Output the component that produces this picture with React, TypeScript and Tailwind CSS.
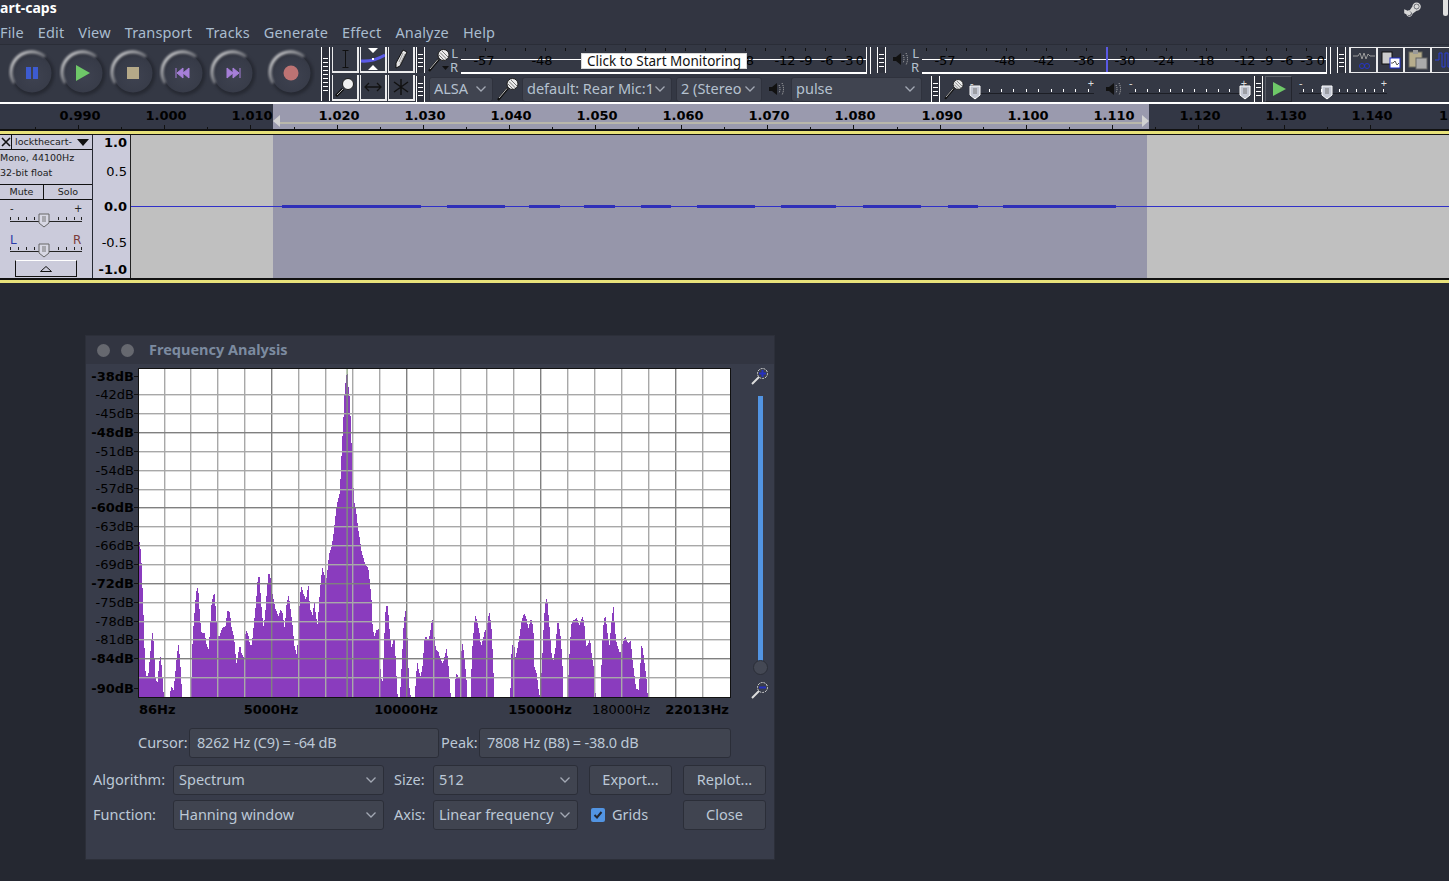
// App.tsx
import { FaSteamSymbol } from "react-icons/fa";

const SANS = "font-['Noto_Sans','Open_Sans',sans-serif]";
const DEJAVU = "font-['DejaVu_Sans',sans-serif]";

const menus = ["File", "Edit", "View", "Transport", "Tracks", "Generate", "Effect", "Analyze", "Help"];

// x, y of the spectrum outline, read off the reference in page pixels
const outlineA = [[27,27],[33,66],[36,133],[39,215],[42,293],[45,415],[50,440],[55,435],[60,380],[65,320],[68,306],[72,350],[76,440],[82,460],[88,395],[92,378],[96,420],[100,485],[103,498],[120,498],[122,480],[126,467],[130,485],[134,450],[140,385],[145,340],[150,385],[155,470],[157,498],[182,498],[184,465],[186,370],[190,295],[195,230],[198,190],[202,170],[206,190],[210,265],[215,310],[224,310],[230,345],[236,358],[240,300],[245,215],[253,186],[258,245],[262,320],[268,318],[278,292],[286,292],[293,238],[300,250],[305,295],[312,320],[317,378],[320,402],[325,370],[330,342],[335,372],[342,382],[346,312],[350,300],[355,315],[360,343],[365,345],[370,300],[378,220],[383,150],[388,132],[393,215],[400,290],[405,260],[410,190],[415,133],[420,130],[425,180],[430,205],[436,235],[445,258],[452,238],[458,250],[464,295],[470,220],[476,195],[482,240],[488,290],[493,345],[500,375],[503,340],[508,235],[513,165],[520,190],[528,210],[535,162],[540,235],[548,255],[553,210],[558,260],[563,285],[570,180],[577,112],[583,135],[590,145],[597,75],[605,50],[612,0]];
const peak = [[336.7,505],[340,491.7],[341,466.7],[342,445],[343.3,421.7],[344.3,398],[345.7,380],[347.3,370.7],[348.3,385],[350,400],[350.7,423],[351.7,448],[352.3,468],[354.3,501.7],[356.7,515],[358.3,530]];
const outlineB = [[690,30],[695,65],[705,100],[715,115],[720,160],[725,215],[728,295],[733,318],[740,300],[747,297],[749,360],[752,430],[757,465],[760,400],[763,320],[767,235],[772,222],[776,260],[780,320],[785,355],[790,330],[794,330],[798,405],[802,490],[805,498],[810,498],[812,462],[816,390],[820,300],[825,245],[828,240],[832,310],[836,430],[838,470],[842,498],[855,498],[858,440],[862,395],[866,420],[872,440],[878,405],[884,320],[890,320],[895,332],[900,310],[905,275],[908,270],[913,315],[918,360],[925,365],[932,390],[938,400],[944,380],[950,355],[955,400],[960,465],[962,498],[975,498]];
const outlineC = [[15,465],[18,430],[25,440],[30,440],[33,375],[38,338],[45,400],[50,455],[52,498],[62,498],[66,370],[70,315],[75,255],[82,275],[88,305],[93,350],[100,325],[105,298],[110,300],[115,260],[119,247],[125,300],[128,370],[132,465],[133,498],[180,498],[183,450],[185,345],[193,345],[197,385],[203,350],[210,310],[215,270],[222,250],[228,260],[235,295],[243,265],[250,290],[253,410],[260,430],[267,490],[270,498],[273,460],[277,380],[282,265],[287,215],[291,202],[296,260],[300,310],[305,375],[310,392],[316,360],[322,280],[326,278],[333,330],[338,415],[339,498],[352,498],[355,445],[360,340],[365,275],[380,265],[388,285],[397,258],[403,280],[408,350],[415,340],[420,325],[425,375],[432,418],[433,498],[436,485],[438,498],[452,498],[456,350],[462,265],[467,260],[472,305],[478,350],[484,280],[490,225],[495,300],[500,340],[508,365],[513,365],[517,345],[525,318],[535,340],[542,332],[548,395],[553,435],[558,475],[566,480],[570,425],[575,340],[580,370],[586,420],[590,450],[593,495],[595,498]];

const spectrum = [
  ...outlineA.map(([x, y]) => [130 + x / 3, 530 + y / 3]),
  ...peak,
  ...outlineB.map(([x, y]) => [130 + x / 3, 530 + y / 3]),
  ...outlineC.map(([x, y]) => [450 + x / 3, 530 + y / 3]),
];

function spectrumPath() {
  let d = "";
  for (let x = 139; x < 649; x++) {
    const i = spectrum.findIndex((p) => p[0] >= x + 0.5);
    if (i <= 0) continue;
    const [x0, y0] = spectrum[i - 1];
    const [x1, y1] = spectrum[i];
    const y = Math.round(y0 + ((y1 - y0) * (x + 0.5 - x0)) / (x1 - x0 || 1));
    if (y < 696) d += `M${x} ${y}V696.5H${x + 1}V${y}Z`;
  }
  return d;
}

const gridY = [394, 413, 432, 451, 470, 489, 507, 526, 545, 564, 583, 602, 621, 639, 658, 677];
const darkY = [432, 507, 583, 658];
const gridX = [164, 190, 217, 244, 271, 298, 325, 352, 379, 406, 433, 460, 486, 513, 540, 567, 594, 621, 648, 675, 702];
const darkX = [271, 406, 540, 675];

const dbLabels: [string, number, boolean][] = [
  ["-38dB", 377, true], ["-42dB", 395, false], ["-45dB", 414, false], ["-48dB", 433, true],
  ["-51dB", 452, false], ["-54dB", 471, false], ["-57dB", 489, false], ["-60dB", 508, true],
  ["-63dB", 527, false], ["-66dB", 546, false], ["-69dB", 565, false], ["-72dB", 584, true],
  ["-75dB", 603, false], ["-78dB", 622, false], ["-81dB", 640, false], ["-84dB", 659, true],
  ["-90dB", 689, true],
];

const rulerMarks = [78, 164, 250, 337, 423, 509, 595, 681, 767, 853, 940, 1026, 1112, 1198, 1284, 1370];
const rulerText = ["0.990", "1.000", "1.010", "1.020", "1.030", "1.040", "1.050", "1.060", "1.070", "1.080", "1.090", "1.100", "1.110", "1.120", "1.130", "1.140"];

const waveSegments = [[282, 421], [447, 505], [529, 560], [584, 615], [641, 671], [697, 755], [781, 836], [863, 921], [948, 978], [1003, 1116]];
const trackTicks = [0, 8, 16, 24, 48, 56, 64, 71];

function Gripper({ tall }: { tall?: boolean }) {
  const bars = tall ? 9 : 4;
  return (
    <div className={`flex w-[9px] shrink-0 flex-col items-center justify-center gap-[3px] border-x border-white bg-[#2f323d] ${tall ? "h-[54px]" : "h-[26px]"}`}>
      {Array.from({ length: bars }).map((_, i) => (
        <span key={i} className="h-[1px] w-[5px] bg-white" />
      ))}
    </div>
  );
}

function RoundButton({ id, children, className }: { id: string; children: React.ReactNode; className?: string }) {
  return (
    <svg width="48" height="50" viewBox="0 0 48 50" className={className}>
      <defs>
        <radialGradient id={`${id}-fill`} cx="0.55" cy="0.6" r="0.6">
          <stop offset="0" stopColor="#3e4250" />
          <stop offset="0.8" stopColor="#373b48" />
          <stop offset="1" stopColor="#30333e" />
        </radialGradient>
        <linearGradient id={`${id}-arc`} x1="0" y1="0" x2="1" y2="1">
          <stop offset="0.1" stopColor="#cfcfd1" />
          <stop offset="0.75" stopColor="#4a4d57" />
        </linearGradient>
      </defs>
      <circle cx="25" cy="26" r="21.5" fill="#262932" className="blur-[1.5px]" />
      <circle cx="24" cy="25" r="19.5" fill={`url(#${id}-fill)`} className="blur-[0.5px]" />
      <path d="M5.5 34A20.5 20.5 0 0 1 36 8" fill="none" stroke={`url(#${id}-arc)`} strokeWidth="3.2" strokeLinecap="round" className="blur-[0.8px]" />
      {children}
    </svg>
  );
}

function Mic({ className, caret }: { className?: string; caret?: boolean }) {
  return (
    <svg width="24" height="24" viewBox="0 0 24 24" className={className}>
      <path d="M1 23L11 11" stroke="#111" strokeWidth="2.4" />
      <path d="M2 21L10 11.5" stroke="#e6e6e6" strokeWidth="0.8" />
      <circle cx="15.5" cy="7" r="5.5" fill="#ececec" stroke="#1c1c1c" />
      <path d="M12 4.5l6.5 6.5M14 3l6 6M11 7l5 5" stroke="#555" strokeWidth="0.8" />
      {caret && <path d="M14 18H21L17.5 22Z" fill="#111" />}
    </svg>
  );
}

function Speaker({ className }: { className?: string }) {
  return (
    <svg width="18" height="16" viewBox="0 0 18 16" className={className}>
      <path d="M1 6H4L9 2V14L4 10H1Z" fill="#111" />
      <path d="M11 4Q13 8 11 12M14 2Q17 8 14 14" fill="none" stroke="#bbb" strokeWidth="1" strokeDasharray="1 1" />
    </svg>
  );
}

function Chevron() {
  return (
    <svg width="10" height="6" viewBox="0 0 10 6" className="shrink-0">
      <path d="M0.5 0.5L5 5L9.5 0.5" fill="none" stroke="#a3a9b4" strokeWidth="1.3" />
    </svg>
  );
}

function Meter({ labels, width, marker }: { labels: [string, number][]; width: number; marker?: number }) {
  const ticks = Array.from({ length: Math.floor(width / 20) }, (_, i) => i * 20 + 4);
  return (
    <div className="relative h-[27px] shrink-0 border-b-2 border-white" style={{ width }}>
      <div className="absolute left-0 right-0 top-[12px] h-[1px] bg-white" />
      {ticks.map((x) => (
        <span key={x} className="absolute top-[1px] h-[3px] w-[1px] bg-[#111]" style={{ left: x }} />
      ))}
      {labels.map(([t, x]) => (
        <span key={t + x} className={`${DEJAVU} absolute top-[6px] -translate-x-1/2 text-[13px] leading-[16px] text-black`} style={{ left: x }}>
          {t}
        </span>
      ))}
      {marker !== undefined && <span className="absolute bottom-0 top-0 w-[2px] bg-[#5a5ae6]" style={{ left: marker }} />}
    </div>
  );
}

function ToolCell({ children }: { children: React.ReactNode }) {
  return <div className="flex h-[26px] w-[27px] items-center justify-center border-r-2 border-b-2 border-l border-white/90">{children}</div>;
}

function SliderThumb({ light }: { light?: boolean }) {
  return (
    <svg width="12" height="15" viewBox="0 0 12 15" className="shrink-0">
      <path d="M1 1H11V10L6 14L1 10Z" fill={light ? "#d8d8e4" : "#c4c8d4"} stroke={light ? "#666" : "#fff"} />
      <path d="M4 4H8M4 6H8M4 8H8" stroke="#777" />
    </svg>
  );
}

function ToolbarSlider({ width, thumb }: { width: number; thumb: number }) {
  const dots = Array.from({ length: 10 }, (_, i) => ((i + 0.5) * width) / 10);
  return (
    <div className="relative h-[24px] shrink-0" style={{ width }}>
      <span className="absolute left-0 top-0 text-[11px] leading-[11px] text-[#ddd]">-</span>
      <span className="absolute right-0 top-0 text-[11px] leading-[11px] text-[#ddd]">+</span>
      <span className="absolute left-0 right-0 top-[16px] h-[1px] bg-[#1c1e25]" />
      {dots.map((x) => (
        <span key={x} className="absolute top-[12px] h-[3px] w-[1px] bg-white" style={{ left: x }} />
      ))}
      <div className="absolute top-[8px]" style={{ left: thumb }}>
        <SliderThumb />
      </div>
    </div>
  );
}

function ToolbarCombo({ label, width }: { label: string; width: number }) {
  return (
    <div className="flex h-[25px] shrink-0 items-center justify-between rounded-[3px] border border-[#2f323d] bg-[#404450] pl-[4px] pr-[6px]" style={{ width }}>
      <span className={`${SANS} whitespace-nowrap text-[14.5px] text-[#b5c1cf]`}>{label}</span>
      <Chevron />
    </div>
  );
}

function DialogCombo({ label, width }: { label: string; width: number }) {
  return (
    <div className="flex h-[30px] shrink-0 items-center justify-between rounded-[3px] border border-[#2b2e38] bg-[#404450] pl-[5px] pr-[7px]" style={{ width }}>
      <span className="whitespace-nowrap text-[14.5px] text-[#bcc8d6]">{label}</span>
      <Chevron />
    </div>
  );
}

function DialogButton({ label }: { label: string }) {
  return (
    <div className="flex h-[30px] w-[83px] shrink-0 items-center justify-center rounded-[3px] border border-[#2b2e38] bg-[#404450] text-[14.5px] text-[#bcc8d6]">
      {label}
    </div>
  );
}

function EditButton({ children }: { children: React.ReactNode }) {
  return <div className="flex h-[26px] w-[27px] shrink-0 items-center justify-center border-t border-l-2 border-b border-white/90">{children}</div>;
}

function TrackSlider({ top }: { top: number }) {
  return (
    <div className="absolute left-[10px] h-[1px] w-[72px] bg-[#222]" style={{ top }}>
      {trackTicks.map((x) => (
        <span key={x} className="absolute bottom-[2px] h-[3px] w-[1px] bg-[#222]" style={{ left: x }} />
      ))}
      <div className="absolute left-[28px] top-[-8px]">
        <SliderThumb light />
      </div>
    </div>
  );
}

export default function App() {
  return (
    <div className={`${SANS} h-[881px] w-[1449px] overflow-hidden bg-[#252831]`}>
      {/* window chrome */}
      <div className="relative h-[22px] bg-[#323541]">
        <span className="absolute left-0 top-0 text-[14px] font-bold leading-[16px] text-white">art-caps</span>
        <FaSteamSymbol className="absolute left-[1403px] top-0 text-[19px] text-[#d8d8d8]" />
        <div className="absolute left-[1443px] top-0 h-[16px] w-[5px] rounded-b-full bg-[#e0e0e0]" />
      </div>
      <div className="flex h-[22px] items-center gap-[14px] bg-[#323541] text-[14.5px] tracking-[0.15px] text-[#a9bccf]">
        {menus.map((m) => (
          <span key={m}>{m}</span>
        ))}
      </div>

      {/* toolbars */}
      <div className="flex h-[58px] border-t border-[#2a2d37] bg-[#343844] pt-[1px]">
        <div className="flex w-[321px] shrink-0 items-center pb-[2px] pl-[10px]">
          <RoundButton id="pause" className="-ml-[2px]">
            <rect x="18" y="19" width="5" height="12" fill="#3d5bd0" />
            <rect x="25" y="19" width="5" height="12" fill="#3d5bd0" />
          </RoundButton>
          <RoundButton id="play" className="ml-[3px]">
            <path d="M17 17L31 25L17 33Z" fill="#6ec868" />
          </RoundButton>
          <RoundButton id="stop" className="ml-[2px]">
            <rect x="18" y="19" width="12" height="12" fill="#b5a988" />
          </RoundButton>
          <RoundButton id="rewind" className="ml-[2px]">
            <path d="M17 20V30M24 20L18 25L24 30ZM30 20L24 25L30 30Z" fill="#a67fd8" stroke="#a67fd8" strokeWidth="1" />
          </RoundButton>
          <RoundButton id="forward" className="ml-[2px]">
            <path d="M31 20V30M24 20L30 25L24 30ZM18 20L24 25L18 30Z" fill="#a67fd8" stroke="#a67fd8" strokeWidth="1" />
          </RoundButton>
          <RoundButton id="record" className="ml-[10px]">
            <circle cx="24" cy="25" r="7.5" fill="#bd7373" />
          </RoundButton>
        </div>

        <div className="mt-[1px]">
          <Gripper tall />
        </div>
        <div className="ml-[2px] mt-[1px] grid h-[54px] w-[84px] shrink-0 grid-cols-3 content-between">
          <ToolCell>
            <svg width="12" height="18" viewBox="0 0 12 18"><path d="M3 0.5H9M6 0.5V17.5M3 17.5H9" transform="translate(0.5 0)" stroke="#111" fill="none" /></svg>
          </ToolCell>
          <ToolCell>
            <svg width="24" height="24" viewBox="0 0 24 24">
              <path d="M7 1H17L12 6ZM7 23H17L12 18Z" fill="#fff" />
              <path d="M0 14Q12 15 24 8" stroke="#5a5ae6" strokeWidth="3" fill="none" />
              <rect x="11" y="11" width="2" height="2" fill="#fff" />
            </svg>
          </ToolCell>
          <ToolCell>
            <svg width="14" height="20" viewBox="0 0 14 20">
              <path d="M9 1L13 3L6 17L2 19L2 14Z" fill="#e6e6e6" stroke="#111" />
              <path d="M9 4L5 13M11 5L6 15" stroke="#777" strokeWidth="0.7" />
            </svg>
          </ToolCell>
          <ToolCell>
            <svg width="20" height="20" viewBox="0 0 20 20">
              <path d="M1 19L8 12" stroke="#111" strokeWidth="3" />
              <path d="M2 18L8 12" stroke="#ddd" strokeWidth="0.8" />
              <circle cx="13" cy="7" r="5.5" fill="#f0f0f0" stroke="#1c1c1c" />
            </svg>
          </ToolCell>
          <ToolCell>
            <svg width="18" height="10" viewBox="0 0 18 10"><path d="M1 5H17M5 1L1 5L5 9M13 1L17 5L13 9" stroke="#111" fill="none" strokeWidth="1.3" /></svg>
          </ToolCell>
          <ToolCell>
            <svg width="16" height="16" viewBox="0 0 16 16"><path d="M8 0V16M1 3L15 13M15 3L1 13" stroke="#111" strokeWidth="1.5" /></svg>
          </ToolCell>
        </div>

        <div className="mt-[1px] flex flex-col gap-[2px]">
          {/* meters row */}
          <div className="flex h-[27px] items-start">
            <Gripper />
            <div className="relative ml-[3px] h-[26px] w-[33px] shrink-0">
              <Mic caret className="absolute left-0 top-[1px]" />
              <span className="absolute right-[3px] top-0 text-[13px] leading-[12px] text-[#b5c1cf]">L</span>
              <span className="absolute right-[3px] top-[14px] text-[13px] leading-[12px] text-[#b5c1cf]">R</span>
            </div>
            <div className="relative">
              <Meter
                width={405}
                labels={[["-57", 23], ["-48", 81], ["8", 289], ["-12", 324], ["-9", 345], ["-6", 366], ["-3", 386], ["0", 399]]}
              />
              <span className="absolute left-[120px] top-[6px] h-[16px] whitespace-nowrap border border-[#d8d8d8] bg-white px-[5px] text-[13.5px] leading-[14px] text-[#111]">
                Click to Start Monitoring
              </span>
            </div>
            <div className="h-[27px] w-[5px] shrink-0 border-x border-white" />
            <div className="ml-[6px]">
              <Gripper />
            </div>
            <div className="relative ml-[3px] h-[26px] w-[33px] shrink-0">
              <Speaker className="absolute left-[3px] top-[4px]" />
              <span className="absolute right-[3px] top-0 text-[13px] leading-[12px] text-[#b5c1cf]">L</span>
              <span className="absolute right-[3px] top-[14px] text-[13px] leading-[12px] text-[#b5c1cf]">R</span>
            </div>
            <Meter
              width={404}
              marker={184}
              labels={[["-57", 23], ["-48", 83], ["-42", 122], ["-36", 162], ["-30", 203], ["-24", 242], ["-18", 282], ["-12", 323], ["-9", 345], ["-6", 365], ["-3", 385], ["0", 399]]}
            />
            <div className="h-[27px] w-[5px] shrink-0 border-x border-white" />
            <div className="ml-[6px]">
              <Gripper />
            </div>
            <div className="ml-[3px] flex">
              <EditButton>
                <svg width="22" height="20" viewBox="0 0 22 20">
                  <path d="M0 6H5L7 3L9 9L11 3L13 9L15 4L17 6H22" stroke="#9a9a9a" fill="none" />
                  <circle cx="9" cy="16" r="2.5" fill="none" stroke="#2535c8" />
                  <circle cx="14" cy="16" r="2.5" fill="none" stroke="#2535c8" />
                </svg>
              </EditButton>
              <EditButton>
                <svg width="22" height="20" viewBox="0 0 22 20">
                  <rect x="2" y="2" width="10" height="12" fill="#ccc" stroke="#111" />
                  <rect x="10" y="8" width="10" height="10" fill="#fff" stroke="#1c2cc8" />
                  <path d="M11 13H13L15 11L17 15L19 13" stroke="#555" fill="none" />
                </svg>
              </EditButton>
              <EditButton>
                <svg width="22" height="22" viewBox="0 0 22 22">
                  <rect x="2" y="3" width="13" height="15" fill="#b7ad8c" stroke="#6b6a5e" />
                  <rect x="6" y="1" width="5" height="4" fill="#999" />
                  <rect x="9" y="9" width="11" height="11" fill="#aaa" stroke="#666" />
                </svg>
              </EditButton>
              <EditButton>
                <svg width="20" height="18" viewBox="0 0 20 18"><path d="M0 9H4V2H7V16H10V2H13V16H16V9H20" stroke="#2a3ed8" fill="none" /></svg>
              </EditButton>
            </div>
          </div>

          {/* device row */}
          <div className="flex h-[26px] items-center">
            <Gripper />
            <div className="ml-[4px]">
              <ToolbarCombo label="ALSA" width={64} />
            </div>
            <Mic className="ml-[4px] shrink-0" />
            <div className="ml-[1px]">
              <ToolbarCombo label="default: Rear Mic:1" width={150} />
            </div>
            <div className="ml-[4px]">
              <ToolbarCombo label="2 (Stereo" width={86} />
            </div>
            <Speaker className="ml-[6px] shrink-0" />
            <div className="ml-[5px]">
              <ToolbarCombo label="pulse" width={131} />
            </div>
            <div className="ml-[9px]">
              <Gripper />
            </div>
            <Mic className="ml-[3px] shrink-0 scale-90" />
            <div className="ml-[3px]">
              <ToolbarSlider width={124} thumb={-1} />
            </div>
            <Speaker className="ml-[11px] shrink-0" />
            <div className="ml-[6px]">
              <ToolbarSlider width={118} thumb={110} />
            </div>
            <div className="ml-[7px]">
              <Gripper />
            </div>
            <div className="ml-[2px] flex h-[26px] w-[27px] shrink-0 items-center justify-center border border-t-[#5a5e68] border-l-[#5a5e68] border-r-[#23252d] border-b-[#23252d]">
              <svg width="16" height="16" viewBox="0 0 16 16"><path d="M2 1L15 8L2 15Z" fill="#6ec868" /></svg>
            </div>
            <div className="ml-[7px]">
              <ToolbarSlider width={88} thumb={22} />
            </div>
          </div>
        </div>
      </div>

      {/* time ruler */}
      <div className="relative h-[27px] border-t-2 border-white bg-[#333745]">
        <div className="absolute bottom-0 left-[273px] top-0 w-[876px] bg-[#9a9aae]" />
        <div className="absolute left-[279px] top-[18px] h-[2px] w-[866px] bg-[#b9b7ab]" />
        <svg width="8" height="12" viewBox="0 0 8 12" className="absolute left-[273px] top-[11px]"><path d="M7 0V12L0 6Z" fill="#d2d2d2" /></svg>
        <svg width="8" height="12" viewBox="0 0 8 12" className="absolute left-[1141px] top-[11px]"><path d="M1 0V12L8 6Z" fill="#d2d2d2" /></svg>
        {rulerMarks.map((x, i) => (
          <div key={x}>
            <span className={`${DEJAVU} absolute top-[4px] -translate-x-1/2 text-[13px] font-bold leading-[16px] text-black`} style={{ left: x + 2 }}>
              {rulerText[i]}
            </span>
            <span className="absolute bottom-0 h-[4px] w-[1px] bg-[#111]" style={{ left: x }} />
            <span className="absolute bottom-0 h-[2px] w-[1px] bg-[#111]" style={{ left: x - 43 }} />
          </div>
        ))}
        <span className={`${DEJAVU} absolute left-[1439px] top-[4px] text-[13px] font-bold leading-[16px] text-black`}>1.</span>
      </div>
      <div className="h-[2px] bg-[#111]" />
      <div className="h-[3px] bg-[#e8e27a]" />

      {/* track */}
      <div className="flex h-[144px] border-t border-[#111]">
        <div className={`${DEJAVU} w-[92px] shrink-0 bg-[#cbcbdb] text-[9.5px] text-[#222]`}>
          <div className="flex h-[15px] border-b border-[#111]">
            <div className="flex w-[12px] items-center justify-center border-r border-[#111]">
              <svg width="10" height="10" viewBox="0 0 10 10"><path d="M1 1L9 9M9 1L1 9" stroke="#111" strokeWidth="1.6" /></svg>
            </div>
            <div className="flex flex-1 items-center justify-between px-[3px]">
              <span>lockthecart-</span>
              <svg width="12" height="7" viewBox="0 0 12 7"><path d="M0 0H12L6 7Z" fill="#111" /></svg>
            </div>
          </div>
          <div className="h-[15px] leading-[15px]">Mono, 44100Hz</div>
          <div className="h-[16px] leading-[16px]">32-bit float</div>
          <div className="mt-[3px] flex h-[16px] border-y border-[#111] text-center leading-[14px]">
            <div className="w-[44px] border-r border-[#111]">Mute</div>
            <div className="flex-1">Solo</div>
          </div>
          <div className="relative h-[78px]">
            <span className="absolute left-[10px] top-[3px] text-[10px] leading-[12px]">-</span>
            <span className="absolute left-[74px] top-[3px] text-[10px] leading-[12px]">+</span>
            <TrackSlider top={21} />
            <span className="absolute left-[10px] top-[33px] text-[12px] leading-[14px] text-[#2a3aa8]">L</span>
            <span className="absolute left-[73px] top-[33px] text-[12px] leading-[14px] text-[#7a3a3a]">R</span>
            <TrackSlider top={51} />
            <div className="absolute bottom-[1px] left-[15px] flex h-[17px] w-[62px] items-center justify-center border border-[#111] border-t-white">
              <svg width="12" height="6" viewBox="0 0 12 6"><path d="M0.5 5.5H11.5L6 0.5Z" fill="none" stroke="#111" /></svg>
            </div>
          </div>
        </div>
        <div className={`${DEJAVU} relative ml-[1px] w-[38px] shrink-0 border-r border-[#222] bg-[#cbcbdb] text-[13px] text-black`}>
          {([["1.0", 8, true], ["0.5", 37, false], ["0.0", 72, true], ["-0.5", 108, false], ["-1.0", 135, true]] as [string, number, boolean][]).map(([t, y, bold]) => (
            <span key={t} className={`absolute right-[3px] -translate-y-1/2 leading-[16px] ${bold ? "font-bold" : ""}`} style={{ top: y }}>
              {t}
            </span>
          ))}
        </div>
        <div className="relative flex-1 bg-[#c0c0c0]">
          <div className="absolute bottom-0 left-[142px] top-0 w-[874px] bg-[#9696aa]" />
          <div className="absolute left-0 right-0 top-[71px] h-[1px] bg-[#3030c8]" />
          {waveSegments.map(([a, b]) => (
            <span key={a} className="absolute top-[70px] h-[3px] bg-[#2f2fb8]" style={{ left: a - 131, width: b - a }} />
          ))}
        </div>
      </div>
      <div className="h-[2px] bg-[#111]" />
      <div className="h-[3px] bg-[#e8e27a]" />

      {/* frequency analysis dialog */}
      <div className="ml-[85px] mt-[52px] h-[525px] w-[690px] border border-[#2c2f39] bg-[#383c4a]">
        <div className="flex h-[28px] items-center bg-[#323541] pl-[11px]">
          <span className="h-[13px] w-[13px] rounded-full bg-[#66686f]" />
          <span className="ml-[11px] h-[13px] w-[13px] rounded-full bg-[#66686f]" />
          <span className="ml-[15px] text-[14.5px] font-bold text-[#7c8ba0]">Frequency Analysis</span>
        </div>

        <div className="flex h-[334px]">
          <div className={`${DEJAVU} relative w-[52px] shrink-0 text-[13px] text-black`}>
            {dbLabels.map(([t, y, bold]) => (
              <div key={t}>
                <span className={`absolute right-[4px] -translate-y-1/2 leading-[16px] ${bold ? "font-bold" : ""}`} style={{ top: y - 364 }}>
                  {t}
                </span>
                <span className="absolute right-0 h-[1px] w-[4px] bg-[#111]" style={{ top: y - 365 }} />
              </div>
            ))}
          </div>
          <svg width="593" height="330" viewBox="138 368 593 330" className="mt-[4px] shrink-0">
            <rect x="138" y="368" width="593" height="330" fill="#fff" />
            <path d={spectrumPath()} fill="#8a3cbe" shapeRendering="crispEdges" />
            {gridX.map((x) => (
              <rect key={x} x={x} y="369" width="1.4" height="328" fill={darkX.includes(x) ? "#808080" : "#a8a8a8"} />
            ))}
            {gridY.map((y) => (
              <rect key={y} x="139" y={y} width="591" height="1.4" fill={darkY.includes(y) ? "#808080" : "#a8a8a8"} />
            ))}
            <rect x="346.5" y="369" width="1.2" height="328" fill="#7f9a72" />
            <rect x="138.5" y="368.5" width="592" height="329" fill="none" stroke="#111" shapeRendering="crispEdges" />
          </svg>
          <div className="relative ml-[21px] w-[16px] shrink-0">
            <svg width="18" height="18" viewBox="0 0 18 18" className="absolute -left-[1px] top-[3px]">
              <path d="M1 17L8 10" stroke="#ddd" strokeWidth="2" />
              <circle cx="11.5" cy="6.5" r="5" fill="#3a3e4b" stroke="#ddd" strokeDasharray="2 1" />
              <rect x="8" y="5.5" width="7" height="2" fill="#2530c0" />
              <rect x="10.5" y="3" width="2" height="7" fill="#2530c0" />
            </svg>
            <div className="absolute left-[6px] top-[32px] h-[266px] w-[5px] bg-[#5294e2]" />
            <div className="absolute left-[1px] top-[296px] h-[15px] w-[15px] rounded-full border border-[#2b2e38] bg-[#444854]" />
            <svg width="18" height="18" viewBox="0 0 18 18" className="absolute -left-[1px] top-[317px]">
              <path d="M1 17L8 10" stroke="#ddd" strokeWidth="2" />
              <circle cx="11.5" cy="6.5" r="5" fill="#3a3e4b" stroke="#ddd" strokeDasharray="2 1" />
              <rect x="8" y="5.5" width="7" height="2" fill="#2530c0" />
            </svg>
          </div>
        </div>

        <div className={`${DEJAVU} relative h-[30px] text-[13px] font-bold leading-[16px] text-black`}>
          <span className="absolute left-[53px] top-[4px]">86Hz</span>
          <span className="absolute left-[185px] top-[4px] -translate-x-1/2">5000Hz</span>
          <span className="absolute left-[320px] top-[4px] -translate-x-1/2">10000Hz</span>
          <span className="absolute left-[454px] top-[4px] -translate-x-1/2">15000Hz</span>
          <span className="absolute left-[535px] top-[4px] -translate-x-1/2 font-normal">18000Hz</span>
          <span className="absolute left-[611px] top-[4px] -translate-x-1/2">22013Hz</span>
        </div>

        <div className="ml-[52px] flex h-[30px] items-center text-[14.5px] text-[#bcc8d6]">
          <span className="w-[51px]">Cursor:</span>
          <div className="flex h-[30px] w-[250px] items-center rounded-[3px] border border-[#2b2e38] bg-[#404450] pl-[7px] tracking-[-0.2px]">8262 Hz (C9) = -64 dB</div>
          <span className="ml-[2px] w-[38px]">Peak:</span>
          <div className="flex h-[30px] w-[252px] items-center rounded-[3px] border border-[#2b2e38] bg-[#404450] pl-[7px] tracking-[-0.2px]">7808 Hz (B8) = -38.0 dB</div>
        </div>

        <div className="ml-[7px] mt-[7px] flex items-center text-[14.5px] text-[#bcc8d6]">
          <span className="w-[80px]">Algorithm:</span>
          <DialogCombo label="Spectrum" width={211} />
          <span className="ml-[10px] w-[39px]">Size:</span>
          <DialogCombo label="512" width={145} />
          <div className="ml-[11px]"><DialogButton label="Export..." /></div>
          <div className="ml-[11px]"><DialogButton label="Replot..." /></div>
        </div>
        <div className="ml-[7px] mt-[5px] flex items-center text-[14.5px] text-[#bcc8d6]">
          <span className="w-[80px]">Function:</span>
          <DialogCombo label="Hanning window" width={211} />
          <span className="ml-[10px] w-[39px]">Axis:</span>
          <DialogCombo label="Linear frequency" width={145} />
          <div className="ml-[13px] flex w-[92px] shrink-0 items-center">
            <span className="flex h-[14px] w-[14px] items-center justify-center rounded-[2px] bg-[#5294e2]">
              <svg width="10" height="10" viewBox="0 0 10 10"><path d="M1.5 5L4 7.5L8.5 2" fill="none" stroke="#23262f" strokeWidth="2" /></svg>
            </span>
            <span className="ml-[7px]">Grids</span>
          </div>
          <DialogButton label="Close" />
        </div>
      </div>
    </div>
  );
}
